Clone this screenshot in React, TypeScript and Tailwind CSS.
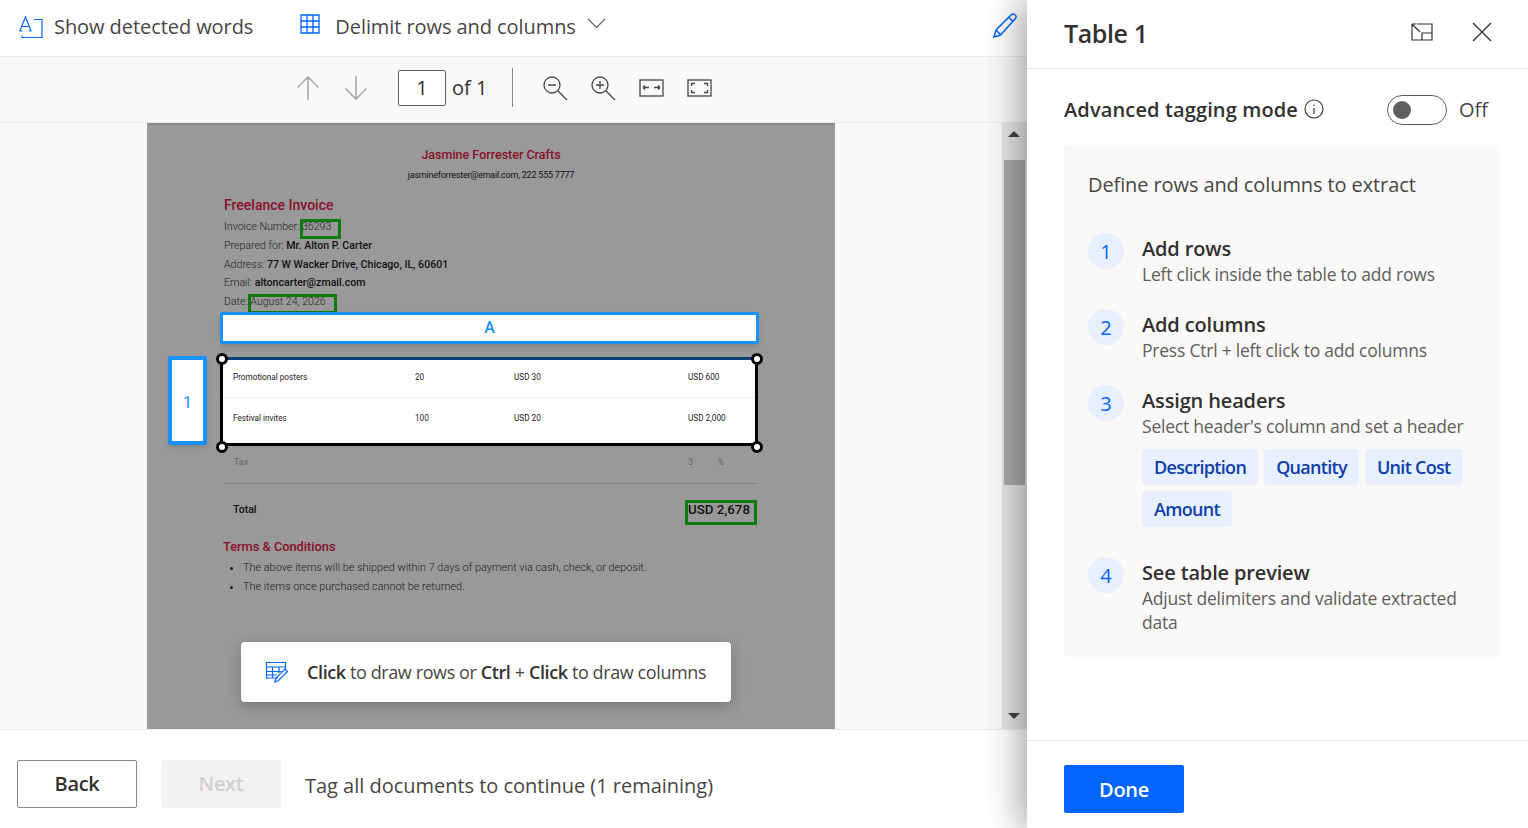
const ui = { fontFamily: '"Open Sans", "Noto Sans", sans-serif' };

function Step({ n, title, sub }: { n: number; title: string; sub: string }) {
  return (
    <div className="flex gap-[18px]">
      <div className="w-9 h-9 shrink-0 rounded-full bg-[#e6f0ff] flex items-center justify-center pt-[2px] text-[20px] font-medium text-[#0066ff]">{n}</div>
      <div>
        <div className="text-[20px] leading-[24px] font-semibold text-[#323130] tracking-[-0.15px] mt-[4px]">{title}</div>
        <div className="text-[17.5px] leading-[24px] text-[#605e5c] tracking-[-0.22px] mt-[1px]">{sub}</div>
      </div>
    </div>
  );
}

function Chip({ label }: { label: string }) {
  return <div className="h-9 px-3 rounded-[4px] bg-[#e6f0ff] flex items-center text-[18px] font-semibold tracking-[-0.7px] text-[#0f3ea8]">{label}</div>;
}

function Toolbar() {
  return (
    <div className="h-[66px] bg-[#faf9f8] border-b border-[#edebe9] flex items-center shrink-0 pl-[296px] pb-[4px] text-[#605e5c]">
      <svg width="24" height="26" viewBox="0 0 24 26" fill="none" stroke="#a19f9d" strokeWidth="1.4"><path d="M12 25V2M1.5 12.5 12 2l10.500 10.500" /></svg>
      <svg className="ml-[24px]" width="24" height="26" viewBox="0 0 24 26" fill="none" stroke="#a19f9d" strokeWidth="1.4"><path d="M12 1v23M1.500 13.500 12 24l10.500-10.500" /></svg>
      <div className="ml-[30px] w-12 h-9 border border-[#605e5c] rounded-[2px] bg-white flex items-center justify-center text-[20px] text-[#323130]">1</div>
      <span className="ml-[6px] text-[20px] text-[#323130]">of 1</span>
      <div className="ml-[25px] w-px h-[39px] bg-[#8a8886]" />
      <svg className="ml-[29px]" width="26" height="26" viewBox="0 0 26 26" fill="none" stroke="#484644" strokeWidth="1.300"><circle cx="10" cy="10" r="8" /><path d="M15.800 15.800 25 25M6 10h8" /></svg>
      <svg className="ml-[22px]" width="26" height="26" viewBox="0 0 26 26" fill="none" stroke="#484644" strokeWidth="1.300"><circle cx="10" cy="10" r="8" /><path d="M15.800 15.800 25 25M6 10h8M10 6v8" /></svg>
      <svg className="ml-[23px]" width="25" height="18" viewBox="0 0 25 18" fill="none" stroke="#484644" strokeWidth="1.300"><rect x="1" y="1" width="23" height="16" /><path d="M4 8.500h6M4 8.500l2-2M4 8.500l2 2M15 8.500h6M21 8.500l-2-2M21 8.500l-2 2" /></svg>
      <svg className="ml-[23px]" width="25" height="18" viewBox="0 0 25 18" fill="none" stroke="#484644" strokeWidth="1.300"><rect x="1" y="1" width="23" height="16" /><path d="M4.500 7V4.500H8M17 4.500h3.500V7M4.500 11v2.500H8M17 13.500h3.500V11" /></svg>
    </div>
  );
}

function Invoice() {
  const label = "text-[#222222] font-light";
  return (
    <div className="w-[688px] h-full bg-[#999999] relative overflow-hidden border-t-2 border-[#8a8a8a] shrink-0 pt-[21px]" style={{ fontFamily: 'Roboto, sans-serif' }}>
      <div className="text-center text-[12.500px] leading-[18px] font-medium text-[#8a0f28]">Jasmine Forrester Crafts</div>
      <div className="text-center text-[9px] leading-[14px] text-[#111] mt-[4px] tracking-[-0.22px]">jasmineforrester@email.com, 222 555 7777</div>
      <div className="pl-[77px] mt-[13px]">
        <div className="text-[14px] leading-[20px] font-medium text-[#8a0f28]">Freelance Invoice</div>
        <div className="text-[10.600px] leading-[18.750px] text-[#111] mt-[3px]">
          <div><span className={label}>Invoice Number: </span><span className={label}>36293</span></div>
          <div><span className={label}>Prepared for: </span><span className="font-medium">Mr. Alton P. Carter</span></div>
          <div><span className={label}>Address: </span><span className="font-medium">77 W Wacker Drive, Chicago, IL, 60601</span></div>
          <div><span className={label}>Email: </span><span className="font-medium">altoncarter@zmail.com</span></div>
          <div><span className={label}>Date: </span><span className={label}>August 24, 2026</span></div>
        </div>
      </div>

      {/* green boxes */}
      <div className="absolute left-[153px] top-[94px] w-[41px] h-[20px] border-[3px] border-[#0e7a0d]" />
      <div className="absolute left-[101px] top-[169px] w-[89px] h-[20px] border-[3px] border-[#0e7a0d]" />
      <div className="absolute left-[538px] top-[375px] w-[72px] h-[25px] border-[3px] border-[#0e7a0d]" />

      {/* column and row tags */}
      <div className="absolute left-[73px] top-[187px] w-[539px] h-[32px] bg-white border-[3px] border-[#1890ff] rounded-[2px] shadow-md flex items-center justify-center text-[16px] font-medium text-[#1890ff]">A</div>
      <div className="absolute left-[21px] top-[231px] w-[39px] h-[89px] bg-white border-[4px] border-[#1890ff] rounded-[2px] shadow-md flex items-center justify-center pt-[4px] text-[16px] text-[#1890ff]">1</div>

      {/* table selection */}
      <div className="absolute left-[73px] top-[232px] w-[538px] h-[89px] bg-white border-[3px] border-black border-t-[#0b3f75] text-[8.200px] text-[#222]">
        <div className="h-[38px] pb-[2px] grid grid-cols-[182px_99px_174px_auto] items-center pl-[10px] border-b border-[#eeeeee]"><span>Promotional posters</span><span>20</span><span>USD 30</span><span>USD 600</span></div>
        <div className="h-[43px] pb-[2px] grid grid-cols-[182px_99px_174px_auto] items-center pl-[10px]"><span>Festival invites</span><span>100</span><span>USD 20</span><span>USD 2,000</span></div>
      </div>
      <span className="absolute left-[69px] top-[228px] w-[12px] h-[12px] rounded-full bg-white border-[3px] border-black" />
      <span className="absolute left-[604px] top-[228px] w-[12px] h-[12px] rounded-full bg-white border-[3px] border-black" />
      <span className="absolute left-[69px] top-[316px] w-[12px] h-[12px] rounded-full bg-white border-[3px] border-black" />
      <span className="absolute left-[604px] top-[316px] w-[12px] h-[12px] rounded-full bg-white border-[3px] border-black" />

      {/* lower part of the invoice */}
      <div className="absolute left-[77px] top-[330px] w-[533px]">
        <div className="flex justify-between pl-[10px] pr-[33px] h-[16px] items-center text-[9px] text-[#636363]"><span>Tax</span><span className="w-[36px] flex justify-between"><span>3</span><span>%</span></span></div>
        <div className="h-px bg-[#858585] mt-[12px]" />
        <div className="flex justify-between pl-[9px] pr-[7px] mt-[16px] h-[20px] items-center">
          <span className="text-[10.500px] font-medium text-[#111]">Total</span>
          <span className="text-[13.300px] font-medium text-[#111]">USD 2,678</span>
        </div>
      </div>
      <div className="absolute left-[76px] top-[413px] text-[#333]">
        <div className="text-[12.800px] leading-[18px] font-medium text-[#8a0f28]">Terms &amp; Conditions</div>
        <ul className="list-disc pl-[20px] mt-[2px] text-[10.900px] leading-[19px] font-light text-[#1a1a1a]">
          <li>The above items will be shipped within 7 days of payment via cash, check, or deposit.</li>
          <li>The items once purchased cannot be returned.</li>
        </ul>
      </div>

      {/* hint toast */}
      <div className="absolute left-[94px] top-[517px] w-[490px] h-[60px] bg-white rounded-[4px] shadow-[0_4px_14px_rgba(0,0,0,0.22)] flex items-center pl-[24px] gap-[18px] text-[18px] tracking-[-0.4px] text-[#484644]" style={ui}>
        <svg width="24" height="22" viewBox="0 0 24 22" fill="none" stroke="#0066ff" strokeWidth="1.200"><path d="M13 17H1.500V1.500h19V9M1.500 6h19M1.500 10.500h15M1.500 14h10M7.500 6v11M14 6v6" /><path d="M10 21l1-4 9-9 2.500 2.500-9 9z" /></svg>
        <div><span className="font-semibold text-[#323130]">Click</span> to draw rows or <span className="font-semibold text-[#323130]">Ctrl</span> + <span className="font-semibold text-[#323130]">Click</span> to draw columns</div>
      </div>
    </div>
  );
}

function Scrollbar() {
  return (
    <div className="w-[25px] h-full bg-[#e6e6e6] flex flex-col items-center shrink-0 pl-[1px]">
      <div className="h-[37px] flex items-center justify-center pr-[2px] pb-[15px] shrink-0"><div className="w-0 h-0 border-x-[6px] border-x-transparent border-b-[6px] border-b-[#444]" /></div>
      <div className="w-[21px] h-[325px] bg-[#ababab] mr-[2px] shrink-0" />
      <div className="flex-1" />
      <div className="h-[26px] flex items-center justify-center pr-[2px] shrink-0"><div className="w-0 h-0 border-x-[6px] border-x-transparent border-t-[6px] border-t-[#444]" /></div>
    </div>
  );
}

export default function App() {
  return (
    <div className="w-[1528px] h-[828px] flex overflow-hidden bg-white" style={ui}>
      <div className="w-[1027px] h-full flex flex-col shrink-0">
        <div className="h-[57px] border-b border-[#edebe9] flex items-center shrink-0 pl-[19px] pr-[9px] pb-[3px] text-[20px] text-[#484644] tracking-[-0.07px]">
          <svg width="24" height="22" viewBox="0 0 24 22" fill="none" stroke="#0066ff" strokeWidth="1.200"><path d="M3 19.500v2h20V3.500h-8" /><path d="M.8 15 6.500 1 12 15M2.500 10.500h8M.5 15h3M9.500 15h3" /></svg>
          <span className="ml-[11px]">Show detected words</span>
          <svg className="ml-[47px] mb-[6px]" width="20" height="20" viewBox="0 0 20 20" fill="none" stroke="#0066ff" strokeWidth="1.300"><path d="M1 1h18v18H1zM1 7h18M1 13h18M7 1v18M13 1v18" /></svg>
          <span className="ml-[15px]">Delimit rows and columns</span>
          <svg className="ml-[11px] mb-[6px]" width="19" height="11" viewBox="0 0 19 11" fill="none" stroke="#605e5c" strokeWidth="1.100"><path d="M1 1l8.500 8.500L18 1" /></svg>
          <svg className="ml-auto mb-[2px]" width="25" height="25" viewBox="0 0 25 25" fill="none" stroke="#0066ff" strokeWidth="1.500"><path d="M1 24l2-7L18 2c1.500-1.500 3-1.500 4 0 1.500 1 1.500 2.500 0 4L7.500 22zM3 17l5 5M16 4.500l4.500 4.500" /></svg>
        </div>
        <Toolbar />
        <div className="flex-1 min-h-0 flex bg-[#faf9f8] border-b border-[#edebe9] pl-[147px]">
          <Invoice />
          <div className="flex-1" />
          <Scrollbar />
        </div>
        <div className="h-[98px] flex items-start shrink-0 pl-[17px] pt-[30px]">
          <div className="w-[120px] h-12 border border-[#8a8886] rounded-[2px] flex items-center justify-center text-[20px] font-semibold tracking-[-0.3px] text-[#323130]">Back</div>
          <div className="ml-6 w-[120px] h-12 rounded-[2px] bg-[#f3f2f1] flex items-center justify-center text-[20px] font-semibold tracking-[-0.3px] text-[#d2d0ce]">Next</div>
          <div className="ml-6 h-12 flex items-center pt-[4px] text-[20px] text-[#484644] tracking-[-0.02px]">Tag all documents to continue (1 remaining)</div>
        </div>
      </div>

      <div className="w-[501px] h-full flex flex-col shrink-0 bg-white relative shadow-[-6px_0_34px_rgba(0,0,0,0.38)]">
        <div className="h-[69px] border-b border-[#edebe9] flex items-center pl-[37px] pr-[36px] shrink-0">
          <div className="text-[25px] font-semibold text-[#323130] tracking-[-0.4px]">Table 1</div>
          <svg className="ml-auto mr-[-1px] mb-[4px]" width="22" height="18" viewBox="0 0 22 18" fill="none" stroke="#323130" strokeWidth="1.200"><path d="M6 1h15v16H1V6M11 17v-7h10M1 1l8 8M1 1v4.500M1 1h4.500" /></svg>
          <svg className="ml-[40px] mb-[4px]" width="20" height="20" viewBox="0 0 20 20" fill="none" stroke="#323130" strokeWidth="1.300"><path d="M1 1l18 18M19 1 1 19" /></svg>
        </div>
        <div className="flex-1 min-h-0 pl-[37px] pr-[28px]">
          <div className="flex items-center h-[30px] mt-[26px] pr-[12px]">
            <span className="text-[20px] font-semibold text-[#323130] tracking-[0.13px]">Advanced tagging mode</span>
            <svg className="ml-[6px] mb-[2px]" width="20" height="20" viewBox="0 0 20 20" fill="none" stroke="#323130" strokeWidth="1.100"><circle cx="10" cy="10" r="9" /><path d="M10 9v6M10 5.500v1.500" /></svg>
            <div className="ml-auto w-[60px] h-[30px] rounded-full border border-[#605e5c] flex items-center pl-[5px]"><div className="w-[18px] h-[18px] rounded-full bg-[#605e5c]" /></div>
            <span className="ml-[12px] text-[20px] text-[#484644]">Off</span>
          </div>
          <div className="mt-5 h-[512px] bg-[#faf9f8] rounded-[4px] pl-6 pr-6 pt-[24px]">
            <div className="text-[20px] leading-[32px] text-[#484644] tracking-[-0.1px]">Define rows and columns to extract</div>
            <div className="mt-[32px] flex flex-col gap-[24px]">
              <div className="h-[52px]"><Step n={1} title="Add rows" sub="Left click inside the table to add rows" /></div>
              <div className="h-[52px]"><Step n={2} title="Add columns" sub="Press Ctrl + left click to add columns" /></div>
              <div>
                <Step n={3} title="Assign headers" sub="Select header's column and set a header" />
                <div className="ml-[54px] mt-[11px] flex flex-wrap gap-[6px] w-[340px]">
                  <Chip label="Description" />
                  <Chip label="Quantity" />
                  <Chip label="Unit Cost" />
                  <Chip label="Amount" />
                </div>
              </div>
              <div className="mt-[6px]"><Step n={4} title="See table preview" sub="Adjust delimiters and validate extracted data" /></div>
            </div>
          </div>
        </div>
        <div className="h-[88px] border-t border-[#edebe9] pl-[37px] pt-[24px] shrink-0">
          <div className="w-[120px] h-12 rounded-[2px] bg-[#0066ff] flex items-center justify-center pt-[2px] text-[20px] font-semibold tracking-[-0.3px] text-white">Done</div>
        </div>
      </div>
    </div>
  );
}
